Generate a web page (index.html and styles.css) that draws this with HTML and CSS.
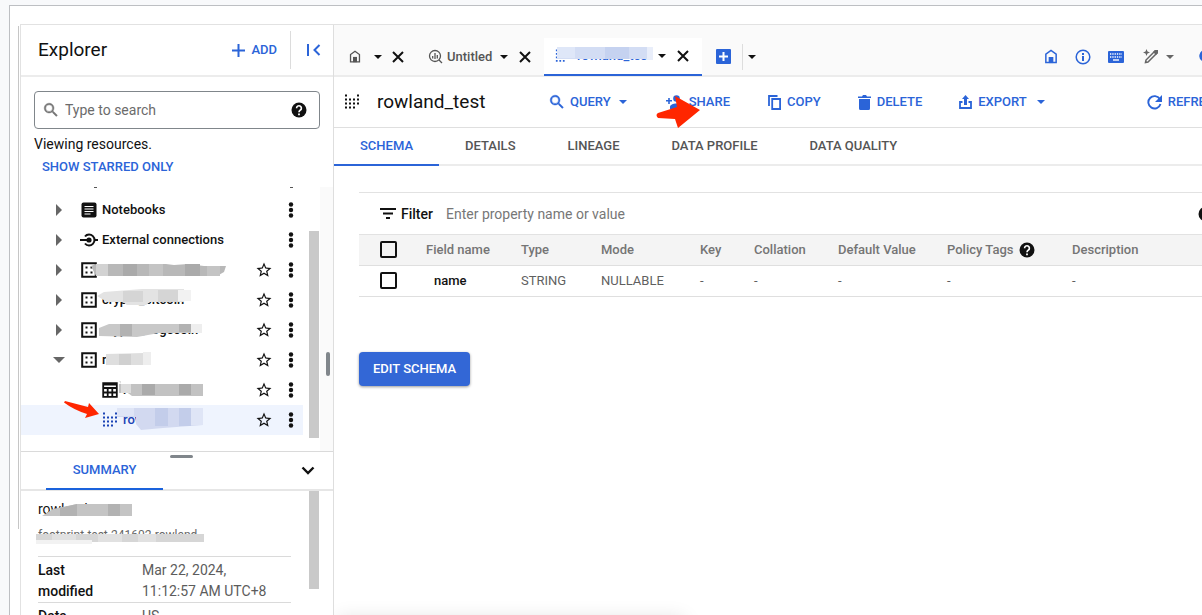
FILE: index.html
```
<!DOCTYPE html>
<html lang="en">
<head>
<meta charset="utf-8">
<title>rowland_test</title>
<link rel="stylesheet" href="styles.css">
</head>
<body>
<svg class="sprite" aria-hidden="true">
  <symbol id="search" viewBox="0 0 24 24"><path d="M15.5 14h-.8l-.3-.3A6.5 6.5 0 1 0 13.7 14.4l.3.3v.8l5 5 1.5-1.5zm-6 0a4.5 4.5 0 1 1 0-9 4.5 4.5 0 0 1 0 9z" stroke="currentColor" stroke-width=".6"/></symbol>
  <symbol id="help" viewBox="0 0 24 24"><path d="M12 2a10 10 0 1 0 0 20 10 10 0 0 0 0-20z"/><path d="M8.800 9.700a3.200 3.200 0 1 1 5.200 2.300c-1.200 1-2 1.500-2 3" fill="none" stroke="#fff" stroke-width="2.200"/><path d="M10.800 16.800h2.400v2.300h-2.400z" fill="#fff"/></symbol>
  <symbol id="right" viewBox="0 0 8 14"><path d="M1 1l6 6-6 6z"/></symbol>
  <symbol id="down" viewBox="0 0 10 5"><path d="M0 0h10L5 5z"/></symbol>
  <symbol id="dots" viewBox="0 0 6 16"><circle cx="3" cy="2.500" r="2.200"/><circle cx="3" cy="8" r="2.200"/><circle cx="3" cy="13.500" r="2.200"/></symbol>
  <symbol id="star" viewBox="0 0 24 24"><path d="M22 9.240l-7.190-.62L12 2 9.190 8.630 2 9.240l5.460 4.730L5.820 21 12 17.270 18.180 21l-1.630-7.030zM12 15.400l-3.760 2.270 1-4.280-3.320-2.880 4.380-.38L12 6.100l1.710 4.040 4.380.38-3.320 2.880 1 4.280z"/></symbol>
  <symbol id="note" viewBox="0 0 16 16"><rect x=".5" y=".5" width="15" height="15" rx="2"/><path d="M3.500 4.500h9M3.500 7h9M3.500 9.500h9M3.500 12h6" stroke="#fff"/></symbol>
  <symbol id="link" viewBox="0 0 18 16"><path d="M14 8h4M5 4.500C6.500 2.500 8 2.500 9 2.500a5.500 5.500 0 0 1 0 11c-1 0-2.500 0-4-2" fill="none" stroke="currentColor" stroke-width="2"/><path d="M0 7h8v2H0z"/><circle cx="9" cy="8" r="2.600"/></symbol>
  <symbol id="data" viewBox="0 0 16 16"><path d="M1.200 1.200h13.600v13.600H1.200z" fill="none" stroke="currentColor" stroke-width="2"/><path d="M4.500 4.500h2v2h-2zM9.500 4.500h2v2h-2zM4.500 9.500h2v2h-2zM9.500 9.500h2v2h-2z"/></symbol>
  <symbol id="grid" viewBox="0 0 16 16"><path d="M1.200 1.200h13.600v13.600H1.200z M1 6h14M1 10.500h14M5.700 6v9M10.300 6v9" fill="none" stroke="currentColor" stroke-width="1.800"/><path d="M1 1h14v2.500H1z"/></symbol>
  <symbol id="ext" viewBox="0 0 16 16"><path d="M1 1.500h3M13 1.500h3M1 5.500h15M1 9.500h15M1 13.500h12" fill="none" stroke="currentColor" stroke-width="2" stroke-dasharray="2 2"/></symbol>
  <symbol id="close" viewBox="0 0 12 12"><path d="M1 1l10 10M11 1L1 11" stroke="currentColor" stroke-width="2"/></symbol>
  <symbol id="home" viewBox="0 0 14 16"><path d="M1.500 14.500V5.500L7 1.500l5.500 4v9z" fill="none" stroke="currentColor" stroke-width="1.600"/><path d="M4.500 8.500h5V15h-5z"/></symbol>
</svg>

<div class="page">
<div class="frame">
<div class="console">

  <aside class="side">
    <header class="side-head">
      <h1>Explorer</h1>
      <button class="btn add"><svg width="13" height="13" viewBox="0 0 13 13"><path d="M6.500 0v13M0 6.500h13" stroke="currentColor" stroke-width="2"/></svg>ADD</button>
      <button class="collapse" aria-label="Collapse"><svg width="14" height="14" viewBox="0 0 14 14"><path d="M1 1v12M12.500 2L7.500 7l5 5" fill="none" stroke="currentColor" stroke-width="2"/></svg></button>
    </header>
    <label class="search">
      <svg class="i18 gray"><use href="#search"/></svg>
      <input type="text" placeholder="Type to search" aria-label="Type to search">
      <svg class="i18"><use href="#help"/></svg>
    </label>
    <p class="viewing">Viewing resources.</p>
    <button class="btn starred">SHOW STARRED ONLY</button>

    <div class="tree">
      <div class="cut"><span></span><span></span></div>
      <div class="row"><svg class="arrow"><use href="#right"/></svg><svg class="ico"><use href="#note"/></svg><span class="name">Notebooks</span><button class="menu" aria-label="Menu"><svg><use href="#dots"/></svg></button></div>
      <div class="row"><svg class="arrow"><use href="#right"/></svg><svg class="ico wide"><use href="#link"/></svg><span class="name">External connections</span><button class="menu" aria-label="Menu"><svg><use href="#dots"/></svg></button></div>
      <div class="row"><svg class="arrow"><use href="#right"/></svg><svg class="ico"><use href="#data"/></svg><span class="name"></span><button class="fav" aria-label="Star"><svg class="i18"><use href="#star"/></svg></button><button class="menu" aria-label="Menu"><svg><use href="#dots"/></svg></button>
        <svg class="mask" width="140" height="20" viewBox="0 0 140 20"><path d="M2 5l5-2h70l8 1 14-1 16 2h22l-2 6-7 4H7z" fill="#b8b8b8"/><path d="M7 3h12v12H7z" fill="#d2d2d2"/><path d="M34 3h14v12H34zM96 3h15v12H96z" fill="#aaa"/><path d="M60 3h14v12H60zM118 5h13v10h-13z" fill="#c4c4c4"/></svg></div>
      <div class="row"><svg class="arrow"><use href="#right"/></svg><svg class="ico"><use href="#data"/></svg><span class="name">crypto_bitcoin</span><button class="fav" aria-label="Star"><svg class="i18"><use href="#star"/></svg></button><button class="menu" aria-label="Menu"><svg><use href="#dots"/></svg></button>
        <svg class="mask" width="140" height="20" viewBox="0 0 140 20"><path d="M8 5l7-4 38-3h42v13H61l-4 3H38l-4-3H18z" fill="#e3e3e3"/><path d="M34 0h20v11H34zM69-1h20v12H69z" fill="#d5d5d5"/><path d="M89-1h13v11H89z" fill="#f2f2f2"/></svg></div>
      <div class="row"><svg class="arrow"><use href="#right"/></svg><svg class="ico"><use href="#data"/></svg><span class="name">crypto_dogecoin</span><button class="fav" aria-label="Star"><svg class="i18"><use href="#star"/></svg></button><button class="menu" aria-label="Menu"><svg><use href="#dots"/></svg></button>
        <svg class="mask" width="140" height="20" viewBox="0 0 140 20"><path d="M10 7l10-4h93v9H70l-22 4-38-1z" fill="#c8c8c8"/><path d="M31 3h12v12H31zM90 3h12v8H90z" fill="#b2b2b2"/><path d="M102 3h11v9h-11z" fill="#eee"/></svg></div>
      <div class="row"><svg class="arrow open"><use href="#down"/></svg><svg class="ico"><use href="#data"/></svg><span class="name">rowland</span><button class="fav" aria-label="Star"><svg class="i18"><use href="#star"/></svg></button><button class="menu" aria-label="Menu"><svg><use href="#dots"/></svg></button>
        <svg class="mask" width="140" height="20" viewBox="0 0 140 20"><path d="M17 3l38-1h7v12H17z" fill="#dedede"/><path d="M30 3h12v11H30z" fill="#d0d0d0"/><path d="M54 1h8v13h-8z" fill="#eee"/></svg></div>
      <div class="row sub"><svg class="ico"><use href="#grid"/></svg><span class="name">rowland_test</span><button class="fav" aria-label="Star"><svg class="i18"><use href="#star"/></svg></button><button class="menu" aria-label="Menu"><svg><use href="#dots"/></svg></button>
        <svg class="mask" width="140" height="20" viewBox="0 0 140 20"><path d="M30 3h84v12H43l-4-3h-9z" fill="#c2c2c2"/><path d="M53 3h13v11H53zM90 3h12v11H90z" fill="#aaa"/><path d="M30 0h2v12h10V3h-10z" fill="#ddd"/></svg></div>
      <div class="row sub selected"><svg class="ico"><use href="#ext"/></svg><span class="name">rowland_test</span><button class="fav" aria-label="Star"><svg class="i18"><use href="#star"/></svg></button><button class="menu" aria-label="Menu"><svg><use href="#dots"/></svg></button>
        <svg class="mask" width="140" height="24" viewBox="0 0 140 24"><path d="M28 0h86v17l-40 3-22 2-5-6V9H28z" fill="#d2d9f0"/><path d="M28 0h17v8H28zM101 0h13v17h-13z" fill="#dfe5f6"/><path d="M66 0h13v18H66zM90 0h12v18H90z" fill="#c3cdea"/></svg>
        <svg class="pointer" width="36" height="20" viewBox="0 0 36 20"><path d="M1 0L24 6 25 2l10 11-14 4 2-4Q10 9 0 1.500z" fill="#ff2600"/></svg></div>
      <span class="track"></span><span class="thumb"></span>
    </div>

    <section class="summary">
      <span class="grip"></span>
      <div class="sum-head"><button class="btn sum-tab">SUMMARY</button><button class="chev" aria-label="Hide summary"><svg width="14" height="9" viewBox="0 0 14 9"><path d="M1.500 1.500L7 7l5.500-5.500" fill="none" stroke="currentColor" stroke-width="2.400"/></svg></button></div>
      <div class="sum-body">
        <div class="sum-name">rowland_test<svg class="veil" width="110" height="16" viewBox="0 0 110 16"><path d="M4 12l11-7 24-5h55v12H4z" fill="#c4c4c4"/><path d="M22 4l17-4v12H22zM70 0h12v12H70z" fill="#b2b2b2"/></svg></div>
        <div class="sum-path">footprint-test-241602.rowland<svg class="veil" width="180" height="16" viewBox="0 0 180 16"><path d="M-2 6h168v8H-2z" fill="#d6d6d6"/><path d="M14 6h24v8H14zM60 6h24v8H60zM100 6h18v8h-18z" fill="#e1e1e1"/><path d="M-2 12h56v4H-2z" fill="#f2f2f2"/></svg></div>
        <dl>
          <div><dt>Last modified</dt><dd>Mar 22, 2024, 11:12:57 AM UTC+8</dd></div>
          <div><dt>Data location</dt><dd>US</dd></div>
        </dl>
        <span class="thumb"></span>
      </div>
    </section>
    <span class="side-grip"></span>
  </aside>

  <main class="main">
    <nav class="tabs">
      <button class="tab first"><svg class="home-s"><use href="#home"/></svg><svg class="caret"><use href="#down"/></svg><svg class="x"><use href="#close"/></svg></button>
      <button class="tab second"><svg width="15" height="15" viewBox="0 0 15 15"><g fill="none" stroke="currentColor" stroke-width="1.300"><circle cx="7" cy="7" r="5.500"/><path d="M11 11l3 3M4.700 7v2.500M7 4v6M9.300 6v3.500"/></g></svg><span>Untitled</span><svg class="caret"><use href="#down"/></svg><svg class="x"><use href="#close"/></svg></button>
      <button class="tab active"><svg class="i14"><use href="#ext"/></svg><span>rowland_test</span><svg class="caret"><use href="#down"/></svg><svg class="x"><use href="#close"/></svg>
        <svg class="tab-mask" width="98" height="13" viewBox="0 0 98 13"><path d="M2 0h96v12H2z" fill="#d3ddf4"/><path d="M2 0h18v11H2z" fill="#dfe7f8"/><path d="M50 0h24v12H50z" fill="#c5d2f0"/><path d="M92 0h6v13h-6z" fill="#e9eefa"/></svg></button>
      <button class="plus" aria-label="New tab"><svg width="15" height="15" viewBox="0 0 15 15"><rect width="15" height="15" rx="1"/><path d="M7.500 3v9M3 7.500h9" stroke="#fff" stroke-width="2"/></svg></button>
      <button class="more" aria-label="More tabs"><svg class="caret"><use href="#down"/></svg></button>
      <div class="tools">
        <button aria-label="Home"><svg class="home-b"><use href="#home"/></svg></button>
        <button aria-label="Info"><svg width="16" height="16" viewBox="0 0 16 16"><circle cx="8" cy="8" r="6.800" fill="none" stroke="currentColor" stroke-width="1.500"/><path d="M7 7h2v5H7zM7 4h2v2H7z"/></svg></button>
        <button aria-label="Keyboard"><svg width="16" height="12" viewBox="0 0 16 12"><rect width="16" height="12" rx="1"/><path d="M2 3h12M2 6h12" stroke="#fff" stroke-width="1.300" stroke-dasharray="1.300 1"/><path d="M5 9h6" stroke="#fff" stroke-width="1.400"/></svg></button>
        <button class="wand" aria-label="Assist"><svg width="16" height="15" viewBox="0 0 16 15"><path d="M2.500 13.500l.5-2.500 9-9 2 2-9 9z" fill="none" stroke="currentColor" stroke-width="1.500"/><path d="M10 3l2-2 3 0v3l-2 2zM3.500 0l1 2.500L7 3.500l-2.500 1-1 2.500-1-2.500L0 3.500l2.500-1z"/></svg><svg class="caret"><use href="#down"/></svg></button>
        <button aria-label="Tips"><svg width="14" height="16" viewBox="0 0 14 16"><path d="M7 1a6 6 0 0 0-3 11h6A6 6 0 0 0 7 1zM4 13h6v2H4z"/></svg></button>
      </div>
    </nav>

    <div class="bar">
      <svg class="bar-ico"><use href="#ext"/></svg>
      <h2>rowland_test</h2>
      <button class="btn query"><svg class="i18"><use href="#search"/></svg>QUERY<svg class="caret"><use href="#down"/></svg></button>
      <button class="btn share"><svg width="16" height="14" viewBox="0 0 16 14"><circle cx="10.500" cy="3.500" r="3.300"/><path d="M4 14v-2c0-2 3-3.500 6.500-3.500S16 10 16 12v2zM2.200 3h1.600v2H6v1.600H3.800V9H2.200V6.600H0V5h2.200z"/></svg>SHARE
        <svg class="big-pointer" width="46" height="36" viewBox="0 0 46 36"><path d="M20 2l25 14-22 18-3-9-17-1q-3-3 0-5l19-6z" fill="#ff2600"/></svg></button>
      <button class="btn copy"><svg width="13" height="15" viewBox="0 0 13 15"><path d="M4.200 4h7.900v10H4.200zM1 11V1h8.500" fill="none" stroke="currentColor" stroke-width="1.800"/></svg>COPY</button>
      <button class="btn delete"><svg width="13" height="15" viewBox="0 0 13 15"><path d="M0 1.500h4L5 0h3l1 1.500h4V3H0zM1 4h11v9.500q0 1.500-1.500 1.500h-8Q1 15 1 13.500z"/></svg>DELETE</button>
      <button class="btn export"><svg width="13" height="14" viewBox="0 0 13 14"><path d="M6.500 0L10 4H8v6H5V4H3z"/><path d="M3.500 7H1v6h11V7H9.500" fill="none" stroke="currentColor" stroke-width="1.800"/></svg>EXPORT<svg class="caret"><use href="#down"/></svg></button>
      <button class="btn refresh"><svg width="15" height="15" viewBox="0 0 15 15"><path d="M12.800 4A6.200 6.200 0 1 0 13.500 9" fill="none" stroke="currentColor" stroke-width="1.900"/><path d="M15 0v7H8z"/></svg>REFRESH</button>
    </div>

    <nav class="subtabs">
      <button class="on">SCHEMA</button><button>DETAILS</button><button>LINEAGE</button><button>DATA PROFILE</button><button>DATA QUALITY</button>
    </nav>

    <div class="content">
      <div class="filter">
        <svg width="16" height="11" viewBox="0 0 16 11"><path d="M0 1h16M3 5.500h10M6 10h4" stroke="currentColor" stroke-width="2"/></svg>
        <label for="filter">Filter</label>
        <input id="filter" type="text" placeholder="Enter property name or value">
        <svg class="i18 filter-help"><use href="#help"/></svg>
      </div>
      <table>
        <colgroup><col class="c1"><col class="c2"><col class="c3"><col class="c4"><col class="c5"><col class="c6"><col class="c7"><col class="c8"><col></colgroup>
        <thead><tr><th><input type="checkbox" aria-label="Select all"></th><th>Field name</th><th>Type</th><th>Mode</th><th>Key</th><th>Collation</th><th>Default Value</th><th><span class="tags">Policy Tags<svg class="i18"><use href="#help"/></svg></span></th><th>Description</th></tr></thead>
        <tbody><tr><td><input type="checkbox" aria-label="Select name"></td><td class="field">name</td><td>STRING</td><td>NULLABLE</td><td>-</td><td>-</td><td>-</td><td>-</td><td>-</td></tr></tbody>
      </table>
      <button class="edit">EDIT SCHEMA</button>
    </div>
    <span class="toast-shadow"></span>
  </main>
</div>
</div>
</div>
</body>
</html>
```
FILE: styles.css
```
* { box-sizing: border-box; }
html, body { height: 100%; }
body { margin: 0; overflow: hidden; background: #f8f9fb; font: 13px/20px Roboto, "Liberation Sans", sans-serif; color: #111; }
h1, h2, p, dl, dd { margin: 0; }
button { display: flex; align-items: center; padding: 0; border: 0; background: none; font: inherit; color: inherit; white-space: nowrap; }
input { font: inherit; color: inherit; }
svg { fill: currentColor; flex: none; }
.sprite { position: absolute; width: 0; height: 0; }

.page { height: 100%; padding: 5px 0 0 9px; }
.frame { position: relative; height: 100%; padding: 18px 0 0 10px; border: solid #bdbfc3; border-width: 1px 0 0 1px; background: #fff; }
.frame::before { content: ""; position: absolute; left: 8px; top: 20px; bottom: 86px; width: 1px; background: #c6c6c6; }
.console { display: grid; grid-template-columns: 313px minmax(0, 1fr); height: 100%; border: solid #e2e2e2; border-width: 1px 0 0 1px; }

.i18 { width: 18px; height: 18px; }
.i14 { width: 14px; height: 14px; }
.caret { width: 8px; height: 4px; }
.gray { color: #757575; }
.btn { color: #2b64d8; font-size: 13px; font-weight: 500; }

.side { position: relative; display: flex; flex-direction: column; min-height: 0; border-right: 1px solid #dedede; }
.side-head { display: flex; align-items: center; height: 52px; flex: none; padding-left: 17px; border-bottom: 2px solid #ececec; }
h1, h2 { font-size: 19px; font-weight: 400; line-height: 24px; }
.add { gap: 6px; margin-left: auto; }
.collapse { height: 38px; margin-left: 13px; padding: 0 12px 0 16px; border-left: 1px solid #dcdcdc; color: #2b64d8; }
.search { display: flex; align-items: center; height: 38px; flex: none; margin: 14px 13px 0 13px; padding: 0 11px 0 7px; border: 1px solid #80868b; border-radius: 4px; }
.search input { flex: 1; min-width: 0; margin-left: 5px; padding: 0; border: 0; outline: 0; font-size: 14px; }
::placeholder { color: #6b6b6b; opacity: 1; }
.viewing { margin: 5px 0 0 13px; font-size: 14px; }
.starred { margin: 3px 0 0 21px; }

.tree { position: relative; flex: none; height: 274px; margin-top: 10px; }
.cut { display: flex; justify-content: space-between; height: 8px; padding: 0 40px 0 73px; }
.cut span { width: 3px; height: 1px; background: #555; }
.row { position: relative; display: flex; align-items: center; width: 282px; height: 30px; padding-left: 34px; font-weight: 500; }
.row .arrow { width: 8px; height: 14px; margin-right: 18px; color: #666; }
.row .arrow.open { width: 12px; height: 6px; margin: 0 16px 0 -2px; }
.row .ico { width: 16px; height: 16px; }
.row .wide { width: 18px; margin: 0 -1px; }
.name { flex: 1; margin-left: 5px; }
.fav { margin-right: 15px; }
.menu svg { width: 6px; height: 16px; }
.menu { margin-right: 9px; }
.sub { padding-left: 81px; }
.selected { background: #eff4fe; }
.selected .ico, .selected .name { color: #1b43b5; }
.mask { position: absolute; left: 68px; top: 6px; overflow: visible; }
.selected .mask { top: 3px; }
.pointer { position: absolute; left: 43px; top: -4px; }
.track { position: absolute; top: 0; bottom: 0; right: 0; width: 13px; background: #fafafa; }
.thumb { position: absolute; right: 14px; width: 10px; background: #c9c9c9; }
.tree .thumb { top: 44px; height: 207px; }
.side-grip { position: absolute; right: 3px; top: 327px; width: 4px; height: 24px; border-radius: 2px; background: #80868b; }

.summary { position: relative; display: flex; flex-direction: column; flex: 1; min-height: 0; margin-top: -10px; border-top: 1px solid #dadada; background: #fff; }
.grip { position: absolute; left: 149px; top: 3px; width: 23px; height: 3px; border-radius: 2px; background: #80868b; }
.sum-head { display: flex; justify-content: space-between; height: 39px; flex: none; padding: 0 18px 0 25px; border-bottom: 2px solid #e6e6e6; }
.sum-tab { width: 117px; height: 38px; justify-content: center; border-bottom: 2px solid #1a62dc; }
.sum-body { position: relative; flex: 1; min-height: 0; overflow: hidden; padding: 8px 42px 0 17px; }
.sum-body .thumb { top: 0; height: 98px; }
.sum-name, .sum-path { position: relative; height: 20px; }
.sum-name { font-size: 14px; }
.sum-path { margin-top: 6px; font-size: 12px; color: #666; }
.veil { position: absolute; left: 0; top: 5px; overflow: visible; }
.sum-path .veil { top: 3px; }
dl { margin-top: 11px; font-size: 14px; line-height: 21px; }
dl div { display: grid; grid-template-columns: 72px minmax(0, 128px); column-gap: 32px; padding-top: 3px; border-top: 1px solid #dadada; }
dt { font-weight: 500; }
dd { color: #5c5c5c; }

.main { position: relative; min-width: 0; overflow: hidden; }
.tabs { display: flex; align-items: center; height: 52px; padding-left: 15px; border-bottom: 2px solid #ececec; background: #fafafa; font-weight: 500; color: #555; }
.tab { height: 38px; margin-top: 13px; }
.tab .caret, .tab .x, .more .caret { color: #111; }
.tab .x { width: 12px; height: 12px; }
.home-s { width: 12px; height: 13px; margin-right: 13px; }
.first .x { margin-left: 10px; }
.second { margin-left: 24px; }
.second span { margin: 0 8px 0 4px; }
.second .x { margin-left: 11px; }
.active { position: relative; width: 158px; margin-left: 13px; padding-left: 11px; border-bottom: 2px solid #2b64d8; background: #fff; color: #2b64d8; }
.active span { width: 82px; margin: 0 3px 0 4px; }
.active .x { margin-left: 11px; }
.tab-mask { position: absolute; left: 11px; top: 9px; }
.plus { margin: 13px 11px 0 14px; color: #2b64d8; }
.more { height: 26px; margin-top: 13px; padding-left: 5px; border-left: 1px solid #ddd; }
.tools { display: flex; align-items: center; gap: 17px; margin: 13px -10px 0 auto; color: #2b64d8; }
.home-b { width: 14px; height: 15px; }
.wand { gap: 7px; margin: 0 7px 0 2px; color: #666; }

.bar { display: flex; align-items: center; height: 51px; padding-left: 10px; border-bottom: 1px solid #dfdfdf; }
.bar-ico { width: 16px; height: 16px; }
.bar h2 { flex: none; width: 108px; margin-left: 17px; }
.bar .btn { flex: none; position: relative; }
.query { gap: 4px; margin-left: 63px; }
.query .caret, .export .caret { margin-left: 4px; }
.share { gap: 7px; margin-left: 39px; }
.big-pointer { position: absolute; left: -11px; top: 2px; }
.copy { gap: 6px; margin-left: 38px; }
.delete { gap: 6px; margin-left: 37px; }
.export { gap: 6px; margin-left: 37px; }
.refresh { gap: 6px; margin-left: 102px; }

.subtabs { display: flex; height: 38px; border-bottom: 2px solid #ececec; font-weight: 500; color: #555; }
.subtabs button { padding: 0 26px; border-bottom: 2px solid transparent; height: 38px; }
.subtabs .on { color: #2b64d8; border-color: #2b64d8; }

.content { padding: 26px 0 0 25px; }
.filter { display: flex; align-items: center; height: 43px; padding-left: 21px; border-top: 1px solid #e2e2e2; border-bottom: 1px solid #e2e2e2; }
.filter label { margin-left: 5px; font-size: 14px; font-weight: 500; }
.filter input { flex: 1; min-width: 0; margin-left: 13px; padding: 0; border: 0; outline: 0; font-size: 14px; }
.filter ::placeholder { color: #777; }
.filter-help { margin-right: -13px; }
table { width: 100%; table-layout: fixed; border-collapse: collapse; }
th, td { height: 31px; padding: 0; border-bottom: 1px solid #dfdfdf; text-align: left; white-space: nowrap; color: #5f5f5f; font-weight: 400; }
th { height: 30px; background: #f4f4f4; font-weight: 500; color: #757575; }
.c1 { width: 67px; } .c2 { width: 95px; } .c3 { width: 80px; } .c4 { width: 99px; } .c5 { width: 54px; } .c6 { width: 84px; } .c7 { width: 109px; } .c8 { width: 125px; }
table input { appearance: none; display: block; width: 17px; height: 17px; margin: 0 0 0 21px; border: 2px solid #111; border-radius: 2px; }
.field { padding-left: 8px; color: #111; font-weight: 500; }
.tags { display: flex; align-items: center; gap: 5px; }
.tags svg { color: #111; }
.edit { justify-content: center; height: 34px; margin-top: 55px; padding: 0 14px; border-radius: 4px; background: #3367d6; color: #fff; font-weight: 500; box-shadow: 0 1px 3px #0006; }
.toast-shadow { position: absolute; left: 4px; bottom: -22px; width: 346px; height: 18px; box-shadow: 0 0 20px #0002; }
```
